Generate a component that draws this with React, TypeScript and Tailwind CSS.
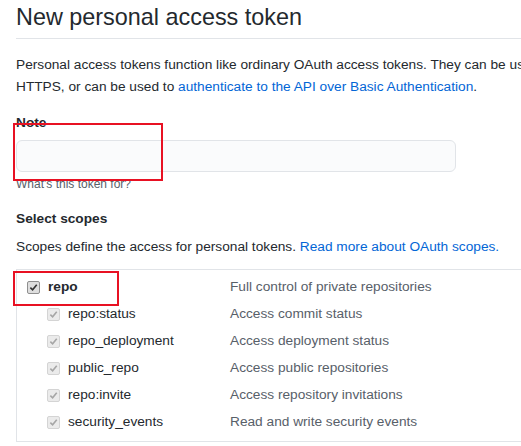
const scopes = [
  { name: "repo:status", desc: "Access commit status" },
  { name: "repo_deployment", desc: "Access deployment status" },
  { name: "public_repo", desc: "Access public repositories" },
  { name: "repo:invite", desc: "Access repository invitations" },
  { name: "security_events", desc: "Read and write security events" },
];

function Check({ disabled }: { disabled?: boolean }) {
  return (
    <span
      className={`flex h-[13px] w-[13px] shrink-0 items-center justify-center rounded-[2px] border ${
        disabled ? "border-[#d4d4d4] bg-[#ebebeb]" : "border-[#8f8f8f] bg-[#dedede]"
      }`}
    >
      <svg viewBox="0 0 10 10" className="h-[9px] w-[9px]">
        <path
          d="M1.5 5.2 L4 7.6 L8.6 2"
          fill="none"
          stroke={disabled ? "#a6a6a6" : "#333"}
          strokeWidth="1.8"
        />
      </svg>
    </span>
  );
}

export default function App() {
  return (
    <div
      className="h-[446px] w-[521px] overflow-hidden bg-white pl-4 text-[13.7px] text-[#24292e]"
      style={{ fontFamily: '"Liberation Sans", Arial, sans-serif' }}
    >
      <div className="border-b border-[#e1e4e8] pb-[5px] pt-[1px]">
        <h1 className="whitespace-nowrap text-[23.4px] font-normal leading-[32px]">
          New personal access token
        </h1>
      </div>

      <p className="mt-[15px] whitespace-nowrap leading-[22px]">
        Personal access tokens function like ordinary OAuth access tokens. They can be used instead of a password for Git over
        <br />
        HTTPS, or can be used to{" "}
        <span className="text-[#0366d6]">authenticate to the API over Basic Authentication</span>.
      </p>

      <div className="relative mt-[14px] w-[440px]">
        <div className="font-bold leading-[21px]">Note</div>
        <div className="mt-[7px] h-[32px] w-[440px] rounded-[6px] border border-[#e1e4e8] bg-[#fafbfc]" />
        <div className="mt-[3px] text-[12px] leading-[18px] text-[#586069]">What's this token for?</div>
        <div className="absolute left-[-3px] top-[11px] h-[58px] w-[150px] border-2 border-[#e81123]" />
      </div>

      <div className="mt-[15px] font-bold leading-[21px]">Select scopes</div>
      <p className="mt-[7px] whitespace-nowrap leading-[21px]">
        Scopes define the access for personal tokens.{" "}
        <span className="text-[#0366d6]">Read more about OAuth scopes.</span>
      </p>

      <div className="mt-[12px] border-l border-t border-[#e1e4e8]">
        <div className="relative flex h-[31px] items-center pt-[4px]">
          <div className="flex w-[213px] items-center gap-[8px] pl-[10px]">
            <Check />
            <span className="font-bold">repo</span>
          </div>
          <span className="whitespace-nowrap text-[#586069]">Full control of private repositories</span>
          <div className="absolute left-[-4px] top-[1px] h-[35px] w-[106px] border-2 border-[#e81123]" />
        </div>
        <div className="border-b border-[#e1e4e8] pb-[5px]">
          {scopes.map((s) => (
            <div key={s.name} className="flex h-[27px] items-center">
              <div className="flex w-[213px] items-center gap-[8px] pl-[30px]">
                <Check disabled />
                <span>{s.name}</span>
              </div>
              <span className="whitespace-nowrap text-[#586069]">{s.desc}</span>
            </div>
          ))}
        </div>
      </div>
    </div>
  );
}
